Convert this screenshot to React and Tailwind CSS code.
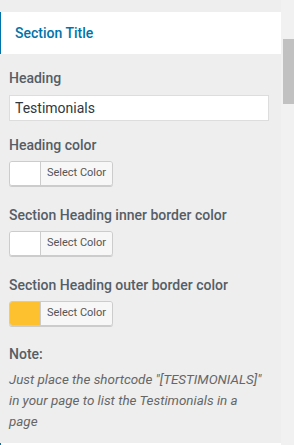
const ColorButton = ({ color }) => (
  <div className="flex h-[25px] w-[104px] overflow-hidden rounded-[3px] border border-[#ccc] shadow-[0_1px_0_#ccc]">
    <div className="w-[31px] border-r border-[#ccc]" style={{ backgroundColor: color }} />
    <div className="flex flex-1 items-center justify-center bg-[#f7f7f7] text-[11px] text-[#555]">
      Select Color
    </div>
  </div>
);

const Field = ({ label, color, className }) => (
  <div className={className}>
    <div className="text-[14px] font-medium leading-[20px] text-[#555d66]">{label}</div>
    <div className="mt-[6px]">
      <ColorButton color={color} />
    </div>
  </div>
);

export default function App() {
  return (
    <div className="flex h-[445px] w-[294px] overflow-hidden bg-[#eeeeee] font-['Roboto',sans-serif]">
      <div className="flex w-[281px] flex-col pt-[12px]">
        <div className="flex h-[42px] items-center border-l border-[#0073aa] bg-white pl-[14px] text-[14px] font-medium text-[#0073aa]">
          Section Title
        </div>
        <div className="px-[9px] pt-[14px]">
          <div className="text-[14px] font-medium leading-[20px] text-[#555d66]">Heading</div>
          <input
            readOnly
            value="Testimonials"
            className="mt-[7px] block h-[26px] w-[260px] border border-[#ddd] bg-white px-[5px] text-[14px] text-[#32373c] outline-none"
          />
          <Field className="mt-[14px]" label="Heading color" color="#ffffff" />
          <Field className="mt-[19px]" label="Section Heading inner border color" color="#ffffff" />
          <Field className="mt-[19px]" label="Section Heading outer border color" color="#fdc02f" />
          <div className="mt-[18px]">
            <div className="text-[14px] font-medium leading-[20px] text-[#555d66]">Note:</div>
            <p className="mt-[5px] whitespace-nowrap text-[13.4px] italic leading-[21px] text-[#666]">
              Just place the shortcode "[TESTIMONIALS]"
              <br />
              in your page to list the Testimonials in a
              <br />
              page
            </p>
          </div>
        </div>
        <div className="mt-auto h-[2px] border-l border-[#0073aa] bg-white" />
      </div>
      <div className="relative w-[13px] bg-[#f1f1f1]">
        <div className="absolute left-[2px] top-[39px] h-[65px] w-[11px] bg-[#c1c1c1]" />
      </div>
    </div>
  );
}
